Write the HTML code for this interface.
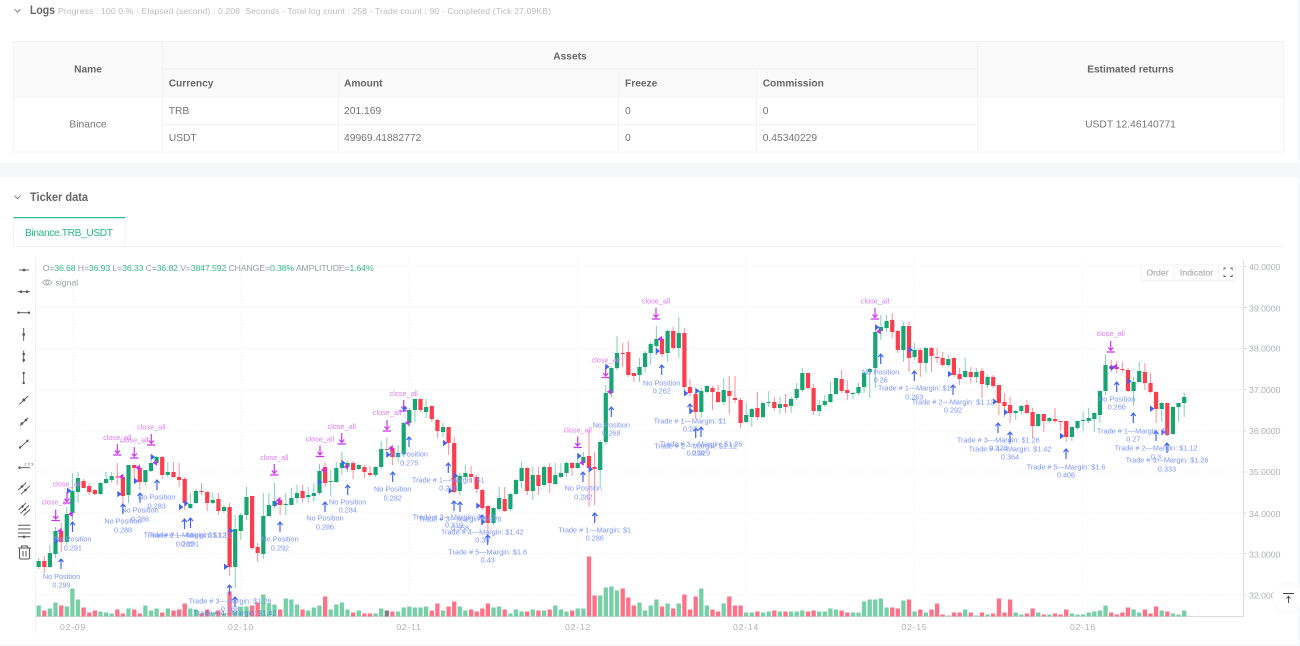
<!DOCTYPE html>
<html>
<head>
<meta charset="utf-8">
<style>
html,body{margin:0;padding:0;width:1300px;height:646px;overflow:hidden;background:#fff}
svg{display:block;filter:blur(.35px);font-family:"Liberation Sans",Arial,sans-serif}
.h{font-size:10.2px;font-weight:bold;fill:#666}
.c{font-size:10.3px;fill:#757575}
.m{text-anchor:middle}
.b{font-size:7.3px;fill:#7f95ff;text-anchor:middle}
.p{font-size:7.3px;fill:#dc7cf6;text-anchor:middle}
.a{font-size:8.7px;fill:#aeb1b6}
.d{font-size:8.7px;fill:#aeb1b6;text-anchor:middle;letter-spacing:.75px}
.ic{stroke:#555;stroke-width:.9;fill:none}
.dk{fill:#555}
.vol{stroke-width:4.3;fill:none}
.wk{stroke-width:1;fill:none}
.bd{stroke-width:4.2;fill:none}
</style>
</head>
<body>
<svg width="1300" height="646" viewBox="0 0 1300 646" xmlns="http://www.w3.org/2000/svg">
<rect width="1300" height="646" fill="#fff"/>
<rect y="163" width="1300" height="14" fill="#f5f6f7"/>
<rect y="644.5" width="1300" height="1.5" fill="#f5f6f7"/>
<rect x="1298" width="2" height="646" fill="#f6f7f8"/>

<!-- Logs header -->
<path d="M14.5 9l3 3.2 3-3.2" stroke="#777" stroke-width=".9" fill="none"/>
<text x="30" y="14" font-size="12" font-weight="bold" fill="#666" textLength="25" lengthAdjust="spacingAndGlyphs">Logs</text>
<text x="58" y="14" font-size="8.6" fill="#bcbcbc" textLength="493" xml:space="preserve">Progress : 100.0 % - Elapsed (second) : 0.208  Seconds - Total log count : 258 - Trade count : 90 - Completed (Tick 27.09KB)</text>

<!-- Table -->
<rect x="13.5" y="41.5" width="1270" height="55.5" fill="#fafafa"/>
<g stroke="#f3f3f3" fill="none">
<rect x="13.5" y="41.5" width="1270" height="110.5"/>
<path d="M13.5 97H1283.5M162.5 41.5V152M977.5 41.5V152M162.5 69H977.5M338.5 69V152M618.5 69V152M756.5 69V152M162.5 124.5H977.5"/>
</g>
<text x="88" y="72.5" class="h m">Name</text>
<text x="570" y="59.5" class="h m">Assets</text>
<text x="1130.5" y="72.5" class="h m">Estimated returns</text>
<text x="168.7" y="86.5" class="h">Currency</text>
<text x="344" y="86.5" class="h">Amount</text>
<text x="625" y="86.5" class="h">Freeze</text>
<text x="762.7" y="86.5" class="h">Commission</text>
<text x="88" y="127.5" class="c m">Binance</text>
<text x="168.7" y="114" class="c">TRB</text>
<text x="344" y="114" class="c">201.169</text>
<text x="625" y="114" class="c">0</text>
<text x="762.7" y="114" class="c">0</text>
<text x="168.7" y="141" class="c">USDT</text>
<text x="344" y="141" class="c">49969.41882772</text>
<text x="625" y="141" class="c">0</text>
<text x="762.7" y="141" class="c">0.45340229</text>
<text x="1130.5" y="127.5" class="c m">USDT 12.46140771</text>

<!-- Ticker header -->
<path d="M14.5 195.5l3 3.2 3-3.2" stroke="#777" stroke-width=".9" fill="none"/>
<text x="30" y="201" font-size="11.6" font-weight="bold" fill="#666" textLength="58" lengthAdjust="spacingAndGlyphs">Ticker data</text>

<!-- Tab -->
<path d="M13.5 246.5H1283.5" stroke="#f2f2f2"/>
<path d="M13.5 218V246M125 218V246" stroke="#f2f2f2"/>
<rect x="13.5" y="217" width="111.5" height="1.2" fill="#26bd8c"/>
<text x="25" y="236" font-size="10.2" fill="#24b988" textLength="88">Binance.TRB_USDT</text>

<!-- Chart frame and grid -->
<path d="M35.5 257V633" stroke="#f2f2f2"/>
<path d="M1243.5 260V616.5H36" stroke="#dcdcdc" fill="none"/>
<g stroke="#f3f3f3" stroke-dasharray="1.5 2" fill="none">
<path d="M36 266.5H1243M36 307.5H1243M36 348.5H1243M36 389.5H1243M36 431H1243M36 472H1243M36 513H1243M36 553.5H1243M36 595H1243"/>
<path d="M73 257V616M241 257V616M409 257V616M578 257V616M746 257V616M914.5 257V616M1083 257V616"/>
</g>
<g stroke="#dcdcdc"><path d="M1244 266.5h3M1244 307.5h3M1244 348.5h3M1244 389.5h3M1244 431h3M1244 472h3M1244 513h3M1244 553.5h3M1244 595h3"/></g>

<!-- Volume bars -->
<path class="vol" stroke="#76cfa7" d="M38.7 616.5v-11M49.9 616.5v-8M55.5 616.5v-14M66.8 616.5v-10M72.4 616.5v-28M78 616.5v-17M100.5 616.5v-5M106.1 616.5v-4M111.7 616.5v-3M128.5 616.5v-8M145.4 616.5v-11M151 616.5v-6M156.6 616.5v-8M167.8 616.5v-8M190.3 616.5v-8M195.9 616.5v-7M212.8 616.5v-4M224 616.5v-3M235.2 616.5v-5M240.8 616.5v-10M246.5 616.5v-10M263.3 616.5v-22M268.9 616.5v-13M274.5 616.5v-12M285.8 616.5v-18M291.4 616.5v-17M297 616.5v-12M308.2 616.5v-6M313.8 616.5v-9M319.5 616.5v-11M330.7 616.5v-7M336.3 616.5v-12M341.9 616.5v-14M347.5 616.5v-7M358.8 616.5v-6M375.6 616.5v-3M381.2 616.5v-8M398.1 616.5v-5M403.7 616.5v-9M409.3 616.5v-10M414.9 616.5v-9M420.5 616.5v-9M426.1 616.5v-10M443 616.5v-6M459.8 616.5v-10M465.4 616.5v-6M493.5 616.5v-9M499.1 616.5v-10M510.4 616.5v-3M516 616.5v-7M521.6 616.5v-5M532.8 616.5v-7M544.1 616.5v-6M555.3 616.5v-11M560.9 616.5v-7M566.5 616.5v-5M577.7 616.5v-8M583.4 616.5v-8M600.2 616.5v-21M605.8 616.5v-29M611.4 616.5v-30M617 616.5v-26M639.5 616.5v-14M645.1 616.5v-6M650.7 616.5v-11M656.4 616.5v-17M667.6 616.5v-13M678.8 616.5v-13M701.3 616.5v-28M706.9 616.5v-11M723.7 616.5v-13M746.2 616.5v-4M751.8 616.5v-4M763 616.5v-4M768.7 616.5v-5M779.9 616.5v-5M791.1 616.5v-5M796.7 616.5v-5M802.3 616.5v-6M819.2 616.5v-5M824.8 616.5v-5M830.4 616.5v-8M836 616.5v-7M852.9 616.5v-4M858.5 616.5v-4M864.1 616.5v-15M869.7 616.5v-17M875.3 616.5v-17M880.9 616.5v-18M886.6 616.5v-9M903.4 616.5v-16M914.6 616.5v-5M925.9 616.5v-4M948.3 616.5v-1M965.2 616.5v-7M976.4 616.5v-1M987.6 616.5v-2M1015.7 616.5v-4M1021.3 616.5v-2M1038.2 616.5v-4M1049.4 616.5v-2M1071.9 616.5v-3M1077.5 616.5v-2M1083.1 616.5v-2M1088.7 616.5v-4M1094.3 616.5v-5M1099.9 616.5v-6M1105.5 616.5v-11M1133.6 616.5v-7M1139.2 616.5v-4M1161.7 616.5v-6M1172.9 616.5v-3M1178.5 616.5v-2M1184.2 616.5v-6"/>
<path class="vol" stroke="#fd7189" d="M44.3 616.5v-6M61.2 616.5v-11M83.6 616.5v-9M89.2 616.5v-4M94.9 616.5v-6M117.3 616.5v-7M122.9 616.5v-3M134.2 616.5v-7M139.8 616.5v-3M162.2 616.5v-4M173.5 616.5v-6M179.1 616.5v-7M184.7 616.5v-13M201.5 616.5v-3M207.2 616.5v-7M218.4 616.5v-6M229.6 616.5v-25M252.1 616.5v-11M257.7 616.5v-14M280.1 616.5v-7M302.6 616.5v-7M325.1 616.5v-20M353.1 616.5v-4M364.4 616.5v-3M370 616.5v-3M392.4 616.5v-5M431.8 616.5v-6M437.4 616.5v-13M448.6 616.5v-10M454.2 616.5v-15M471.1 616.5v-7M476.7 616.5v-5M482.3 616.5v-8M487.9 616.5v-13M504.7 616.5v-7M527.2 616.5v-5M538.4 616.5v-6M549.7 616.5v-7M572.1 616.5v-6M589 616.5v-60M594.6 616.5v-21M622.7 616.5v-28M628.3 616.5v-19M633.9 616.5v-11M662 616.5v-10M673.2 616.5v-8M684.4 616.5v-22M690 616.5v-7M695.7 616.5v-20M712.5 616.5v-7M718.1 616.5v-5M729.3 616.5v-20M735 616.5v-11M740.6 616.5v-11M757.4 616.5v-5M774.3 616.5v-6M785.5 616.5v-5M808 616.5v-5M813.6 616.5v-6M841.6 616.5v-6M847.3 616.5v-4M892.2 616.5v-9M897.8 616.5v-8M909 616.5v-17M920.3 616.5v-7M931.5 616.5v-7M937.1 616.5v-13M942.7 616.5v-2M953.9 616.5v-4M959.6 616.5v-4M970.8 616.5v-4M982 616.5v-4M993.2 616.5v-3M998.9 616.5v-18M1004.5 616.5v-4M1010.1 616.5v-17M1026.9 616.5v-3M1032.6 616.5v-8M1043.8 616.5v-2M1055 616.5v-3M1060.6 616.5v-2M1066.2 616.5v-7M1111.2 616.5v-4M1116.8 616.5v-2M1122.4 616.5v-4M1128 616.5v-9M1144.9 616.5v-7M1150.5 616.5v-3M1156.1 616.5v-10M1167.3 616.5v-5"/>
<path class="vol" stroke="#7d7d7d" d="M386.8 616.5v-6"/>

<!-- Wicks -->
<path class="wk" stroke="#80d2b3" d="M38.7 558V569M49.9 545V568M55.5 527V558M66.8 507V545M72.4 473V520M78 472V503M100.5 482V495M106.1 472V484M111.7 472V483M128.5 465V503M145.4 470V485M151 460V472M156.6 456V465M167.8 462V477M190.3 493V509M195.9 489V504M212.8 493V504M224 505V513M235.2 515V588M240.8 513V540M246.5 487V520M263.3 493V559M268.9 493V517M274.5 483V508M285.8 493V515M291.4 488V505M297 485V503M308.2 487V503M313.8 483V502M319.5 464V495M330.7 470V496M336.3 462V483M341.9 452V475M347.5 461V472M358.8 464V470M375.6 466V477M381.2 441V469M398.1 445V462M403.7 422V457M409.3 408V427M414.9 399V422M426.1 399V418M443 423V437M459.8 473V495M465.4 465V480M493.5 507V525M499.1 487V511M510.4 493V511M516 479V495M521.6 462V488M532.8 467V500M544.1 465V487M555.3 463V485M560.9 463V478M566.5 461V477M577.7 453V469M583.4 452V465M600.2 440V487M605.8 385V445M611.4 367V397M617 336V370M639.5 358V382M645.1 351V372M650.7 342V364M656.4 326V355M667.6 329V362M678.8 317V358M701.3 388V418M706.9 385V393M723.7 378V405M746.2 403V423M751.8 408V427M763 402V418M768.7 391V407M779.9 397V414M791.1 397V413M796.7 383V400M802.3 368V392M819.2 400V416M824.8 395V407M830.4 382V403M836 378V395M852.9 392V399M858.5 383V395M864.1 372V393M869.7 368V398M875.3 330V388M880.9 315V340M886.6 315V332M903.4 322V362M914.6 343V360M925.9 347V373M948.3 355V367M965.2 358V378M976.4 368V383M987.6 375V388M1015.7 410V420M1021.3 405V414M1038.2 414V427M1049.4 417V423M1071.9 427V441M1077.5 421V430M1083.1 412V431M1088.7 408V423M1094.3 412V432M1099.9 391V423M1105.5 354V395M1133.6 377V406M1139.2 362V383M1161.7 402V422M1172.9 406V435M1178.5 403V422M1184.2 393V417"/>
<path class="wk" stroke="#fd8e9a" d="M44.3 556V573M61.2 523V552M83.6 479V488M89.2 483V495M94.9 489V495M117.3 463V485M122.9 474V507M134.2 465V483M139.8 468V490M162.2 456V479M173.5 462V478M179.1 463V487M184.7 477V510M201.5 483V495M207.2 491V511M218.4 493V515M229.6 503V576M252.1 496V550M257.7 543V562M280.1 497V515M302.6 485V502M325.1 463V487M353.1 461V479M364.4 465V478M370 466V477M392.4 445V465M420.5 399V412M431.8 405V422M437.4 419V438M448.6 427V455M454.2 437V493M471.1 466V483M476.7 475V493M482.3 489V510M487.9 505V533M504.7 487V512M527.2 467V495M538.4 467V495M549.7 463V493M572.1 462V476M589 430V507M594.6 452V505M622.7 343V367M628.3 341V377M633.9 373V382M662 338V357M673.2 327V350M684.4 328V392M690 379V396M695.7 392V419M712.5 386V410M718.1 385V403M729.3 376V414M735 376V403M740.6 398V428M757.4 392V420M774.3 397V411M785.5 394V413M808 373V390M813.6 384V415M841.6 370V393M847.3 380V400M892.2 313V338M897.8 330V353M909 322V372M920.3 348V377M931.5 347V372M937.1 348V363M942.7 352V367M953.9 357V377M959.6 368V385M970.8 367V383M982 368V398M993.2 375V388M998.9 385V415M1004.5 393V417M1010.1 397V423M1026.9 400V414M1032.6 408V438M1043.8 414V432M1055 408V423M1060.6 421V431M1066.2 421V442M1111.2 360V372M1116.8 361V373M1122.4 362V372M1128 368V392M1144.9 363V390M1150.5 373V393M1156.1 391V423M1167.3 403V436"/>
<path class="wk" stroke="#bbbbbb" d="M386.8 438V453"/>

<!-- Candle bodies -->
<path class="bd" stroke="#17a673" d="M38.7 561V567M49.9 553V567M55.5 531V554M66.8 514V542M72.4 491V513M78 478V492M100.5 483V494M106.1 479V483M111.7 476V480M128.5 465V495M145.4 470V482M151 463V471M156.6 457V463M167.8 472V475M190.3 504V508M195.9 491V503M212.8 500V503M224 507V511M235.2 529V567M240.8 515V531M246.5 497V515M263.3 516V554M268.9 505V516M274.5 501V506M285.8 504V505M291.4 498V505M297 493V498M308.2 495V497M313.8 493V496M319.5 471V493M330.7 481V482M336.3 468V482M341.9 463V468M347.5 463V467M358.8 465V469M375.6 467V475M381.2 449V467M398.1 453V457M403.7 423V454M409.3 410V423M414.9 399V410M426.1 407V412M443 427V432M459.8 476V491M465.4 473V477M493.5 508V523M499.1 498V509M510.4 494V509M516 480V494M521.6 468V481M532.8 475V491M544.1 467V485M555.3 475V484M560.9 473V477M566.5 463V473M577.7 463V468M583.4 457V463M600.2 442V470M605.8 393V442M611.4 368V393M617 353V368M639.5 367V375M645.1 353V367M650.7 344V353M656.4 339V346M667.6 331V353M678.8 333V348M701.3 391V412M706.9 386V392M723.7 390V402M746.2 415V422M751.8 409V417M763 403V417M768.7 402V403M779.9 404V408M791.1 399V406M796.7 389V398M802.3 373V390M819.2 405V411M824.8 401V405M830.4 394V402M836 378V394M852.9 393V394M858.5 387V393M864.1 373V387M869.7 369V372M875.3 332V368M880.9 327V331M886.6 321V328M903.4 326V350M914.6 350V357M925.9 348V363M948.3 359V365M965.2 371V377M976.4 372V377M987.6 377V385M1015.7 411V413M1021.3 406V411M1038.2 414V426M1049.4 418V421M1071.9 427V437M1077.5 421V428M1083.1 420V421M1088.7 418V421M1094.3 413V419M1099.9 391V415M1105.5 365V391M1133.6 382V391M1139.2 371V382M1161.7 403V409M1172.9 407V434M1178.5 403V407M1184.2 397V403"/>
<path class="bd" stroke="#fb3d4e" d="M44.3 561V567M61.2 531V542M83.6 481V488M89.2 486V492M94.9 490V494M117.3 476.5V477.5M122.9 477V496M134.2 465V468M139.8 468V482M162.2 457V475M173.5 472V477M179.1 477V480M184.7 479V503M201.5 491V492M207.2 492V503M218.4 499V511M229.6 507V567M252.1 496V548M257.7 547V553M280.1 500V505M302.6 491V498M325.1 467V483M353.1 463V470M364.4 467V472M370 473V475M392.4 448V457M420.5 399V410M431.8 406V419M437.4 420V431M448.6 427V443M454.2 443V492M471.1 474V477M476.7 477V489M482.3 490V508M487.9 506V523M504.7 499V511M527.2 468V491M538.4 475V486M549.7 467V483M572.1 463V468M589 456V468M594.6 467V469M622.7 353V354M628.3 352V375M633.9 373V376M662 339V354M673.2 331V348M684.4 333V387M690 387V393M695.7 394V412M712.5 388V392M718.1 392V402M729.3 391V396M735 398V400M740.6 400V423M757.4 408V417M774.3 402V408M785.5 404V407M808 373V388M813.6 388V411M841.6 379V391M847.3 390V393M892.2 320V332M897.8 331V350M909 326V358M920.3 350V363M931.5 348V356M937.1 357V358M942.7 358V365M953.9 358V375M959.6 374V379M970.8 372V377M982 371V384M993.2 377V386M998.9 385V403M1004.5 402V406M1010.1 405V413M1026.9 405V413M1032.6 412V426M1043.8 414V421M1055 419V421M1060.6 421V422M1066.2 421V437M1111.2 366V369M1116.8 367V369M1122.4 369V370M1128 370V391M1144.9 372V383M1150.5 383V392M1156.1 392V409M1167.3 403V435"/>
<path class="bd" stroke="#888888" d="M386.8 449V450"/>

<!-- Blue arrows -->
<path stroke="#3f63f6" stroke-width="1.2" fill="none" d="M61 559v10m-2.5-7l2.5-3 2.5 3M72.5 522v10m-2.5-7l2.5-3 2.5 3M123 504v10m-2.5-7l2.5-3 2.5 3M140 493v10m-2.5-7l2.5-3 2.5 3M157 480v10m-2.5-7l2.5-3 2.5 3M184.5 519v10m-2.5-7l2.5-3 2.5 3M190.5 518v10m-2.5-7l2.5-3 2.5 3M229.5 585v10m-2.5-7l2.5-3 2.5 3M235 597v10m-2.5-7l2.5-3 2.5 3M280 522v10m-2.5-7l2.5-3 2.5 3M325 502v10m-2.5-7l2.5-3 2.5 3M347.7 485v10m-2.5-7l2.5-3 2.5 3M392.7 472v10m-2.5-7l2.5-3 2.5 3M409 437v10m-2.5-7l2.5-3 2.5 3M448.3 463v10m-2.5-7l2.5-3 2.5 3M454 501v10m-2.5-7l2.5-3 2.5 3M460 502v10m-2.5-7l2.5-3 2.5 3M482 515v10m-2.5-7l2.5-3 2.5 3M487.7 535v10m-2.5-7l2.5-3 2.5 3M594.7 513v10m-2.5-7l2.5-3 2.5 3M583 472v10m-2.5-7l2.5-3 2.5 3M611.3 407v10m-2.5-7l2.5-3 2.5 3M661.7 365v10m-2.5-7l2.5-3 2.5 3M690 404v10m-2.5-7l2.5-3 2.5 3M695.7 428v10m-2.5-7l2.5-3 2.5 3M701 427v10m-2.5-7l2.5-3 2.5 3M880.7 354v10m-2.5-7l2.5-3 2.5 3M914.3 371v10m-2.5-7l2.5-3 2.5 3M953 385v10m-2.5-7l2.5-3 2.5 3M998 423v10m-2.5-7l2.5-3 2.5 3M1010 432v10m-2.5-7l2.5-3 2.5 3M1066 449v10m-2.5-7l2.5-3 2.5 3M1116.7 382v10m-2.5-7l2.5-3 2.5 3M1133.3 413v10m-2.5-7l2.5-3 2.5 3M1156 431v10m-2.5-7l2.5-3 2.5 3M1167 443v10m-2.5-7l2.5-3 2.5 3"/>

<!-- Purple close arrows -->
<path stroke="#cb35ee" stroke-width="1.2" fill="none" d="M55.7 509.5v9.5m-2.5-3l2.5 3 2.5-3m-6.7 4.5h8.4M67 492v9.5m-2.5-3l2.5 3 2.5-3m-6.7 4.5h8.4M117.3 444v9.5m-2.5-3l2.5 3 2.5-3m-6.7 4.5h8.4M134.3 447v9.5m-2.5-3l2.5 3 2.5-3m-6.7 4.5h8.4M151.3 434v9.5m-2.5-3l2.5 3 2.5-3m-6.7 4.5h8.4M274.3 464v9.5m-2.5-3l2.5 3 2.5-3m-6.7 4.5h8.4M320 445.5v9.5m-2.5-3l2.5 3 2.5-3m-6.7 4.5h8.4M341.7 433v9.5m-2.5-3l2.5 3 2.5-3m-6.7 4.5h8.4M387 420v9.5m-2.5-3l2.5 3 2.5-3m-6.7 4.5h8.4M403.7 400v9.5m-2.5-3l2.5 3 2.5-3m-6.7 4.5h8.4M577.7 436.5v9.5m-2.5-3l2.5 3 2.5-3m-6.7 4.5h8.4M605.7 366.5v9.5m-2.5-3l2.5 3 2.5-3m-6.7 4.5h8.4M656 308v9.5m-2.5-3l2.5 3 2.5-3m-6.7 4.5h8.4M875 308v9.5m-2.5-3l2.5 3 2.5-3m-6.7 4.5h8.4M1110.7 341v9.5m-2.5-3l2.5 3 2.5-3m-6.7 4.5h8.4"/>

<!-- Entry / exit triangles -->
<path fill="#3f63f6" d="M57 540.7m-2-3.2l4.4 3.2-4.4 3.2zM69 490.7m-2-3.2l4.4 3.2-4.4 3.2zM119.3 494m-2-3.2l4.4 3.2-4.4 3.2zM136 481m-2-3.2l4.4 3.2-4.4 3.2zM152.7 457m-2-3.2l4.4 3.2-4.4 3.2zM181 507m-2-3.2l4.4 3.2-4.4 3.2zM186.3 503.3m-2-3.2l4.4 3.2-4.4 3.2zM226 566.7m-2-3.2l4.4 3.2-4.4 3.2zM231.3 530.7m-2-3.2l4.4 3.2-4.4 3.2zM276 503.7m-2-3.2l4.4 3.2-4.4 3.2zM320 482m-2-3.2l4.4 3.2-4.4 3.2zM343.3 463m-2-3.2l4.4 3.2-4.4 3.2zM388.3 454.7m-2-3.2l4.4 3.2-4.4 3.2zM405 408.3m-2-3.2l4.4 3.2-4.4 3.2zM445 443m-2-3.2l4.4 3.2-4.4 3.2zM450.7 490.7m-2-3.2l4.4 3.2-4.4 3.2zM455.7 475.7m-2-3.2l4.4 3.2-4.4 3.2zM478.3 505.7m-2-3.2l4.4 3.2-4.4 3.2zM483.3 521.7m-2-3.2l4.4 3.2-4.4 3.2zM579.3 456m-2-3.2l4.4 3.2-4.4 3.2zM590.7 469.3m-2-3.2l4.4 3.2-4.4 3.2zM607.3 366.7m-2-3.2l4.4 3.2-4.4 3.2zM657.7 351m-2-3.2l4.4 3.2-4.4 3.2zM686 393.3m-2-3.2l4.4 3.2-4.4 3.2zM691.3 411m-2-3.2l4.4 3.2-4.4 3.2zM697.3 391m-2-3.2l4.4 3.2-4.4 3.2zM877 327.3m-2-3.2l4.4 3.2-4.4 3.2zM910.7 349.7m-2-3.2l4.4 3.2-4.4 3.2zM950 374m-2-3.2l4.4 3.2-4.4 3.2zM995 401.7m-2-3.2l4.4 3.2-4.4 3.2zM1006 412.3m-2-3.2l4.4 3.2-4.4 3.2zM1062 436m-2-3.2l4.4 3.2-4.4 3.2zM1112.7 367.7m-2-3.2l4.4 3.2-4.4 3.2zM1129.3 381.3m-2-3.2l4.4 3.2-4.4 3.2zM1152 408.7m-2-3.2l4.4 3.2-4.4 3.2zM1163.3 432.3m-2-3.2l4.4 3.2-4.4 3.2z"/>
<path fill="#c832ee" d="M59.7 531m2-3.2l-4.4 3.2 4.4 3.2zM70.7 514m2-3.2l-4.4 3.2 4.4 3.2zM121.3 476.7m2-3.2l-4.4 3.2 4.4 3.2zM138 467.7m2-3.2l-4.4 3.2 4.4 3.2zM155 462.7m2-3.2l-4.4 3.2 4.4 3.2zM278.3 500.3m2-3.2l-4.4 3.2 4.4 3.2zM323.3 470m2-3.2l-4.4 3.2 4.4 3.2zM346 466.7m2-3.2l-4.4 3.2 4.4 3.2zM390.7 448.3m2-3.2l-4.4 3.2 4.4 3.2zM407.3 422.7m2-3.2l-4.4 3.2 4.4 3.2zM581.7 462.7m2-3.2l-4.4 3.2 4.4 3.2zM609.3 391.7m2-3.2l-4.4 3.2 4.4 3.2zM660 339m2-3.2l-4.4 3.2 4.4 3.2zM878.7 331.3m2-3.2l-4.4 3.2 4.4 3.2zM1115 366.7m2-3.2l-4.4 3.2 4.4 3.2z"/>

<!-- Annotation labels -->
<g>
<text class="b" x="61.5" y="579">No Position</text><text class="b" x="61.5" y="587.7">0.299</text>
<text class="b" x="72.8" y="541.7">No Position</text><text class="b" x="72.8" y="550.4">0.291</text>
<text class="b" x="123" y="523.7">No Position</text><text class="b" x="123" y="532.6">0.288</text>
<text class="b" x="140" y="512.7">No Position</text><text class="b" x="140" y="521.6">0.286</text>
<text class="b" x="156.7" y="499.7">No Position</text><text class="b" x="156.7" y="508.6">0.283</text>
<text class="b" x="185" y="537.7">Trade # 2---Margin: $1.12</text><text class="b" x="185" y="546.6">0.282</text>
<text class="b" x="190" y="537.7">Trade # 1---Margin: $1.12</text><text class="b" x="190" y="546.6">0.291</text>
<text class="b" x="230" y="603.3">Trade # 3---Margin: $1.26</text><text class="b" x="230" y="611.6">0.268</text>
<text class="b" x="235" y="615.6" style="fill:#4f86c8">Trade # 4---Margin: $1.42</text>
<text class="b" x="280" y="541.7">No Position</text><text class="b" x="280" y="550.6">0.292</text>
<text class="b" x="325" y="520.6">No Position</text><text class="b" x="325" y="529.3">0.286</text>
<text class="b" x="347.7" y="504.3">No Position</text><text class="b" x="347.7" y="512.6">0.284</text>
<text class="b" x="392.7" y="491.6">No Position</text><text class="b" x="392.7" y="500.3">0.282</text>
<text class="b" x="409.3" y="456.6">No Position</text><text class="b" x="409.3" y="465.3">0.275</text>
<text class="b" x="448.3" y="482.6">Trade # 1---Margin: $1</text><text class="b" x="448.3" y="490.6">0.238</text>
<text class="b" x="454" y="519.3">Trade # 2---Margin: $1.12</text><text class="b" x="454" y="527.6">0.319</text>
<text class="b" x="460" y="521.6">Trade # 3---Margin: $1.26</text><text class="b" x="460" y="530.6">0.358</text>
<text class="b" x="482.3" y="534.6">Trade # 4---Margin: $1.42</text><text class="b" x="482.3" y="542.6">0.38</text>
<text class="b" x="487.7" y="554.3">Trade # 5---Margin: $1.6</text><text class="b" x="487.7" y="562.6">0.43</text>
<text class="b" x="594.7" y="532.3">Trade # 1---Margin: $1</text><text class="b" x="594.7" y="540.6">0.286</text>
<text class="b" x="583.3" y="490.6">No Position</text><text class="b" x="583.3" y="499.6">0.282</text>
<text class="b" x="611.3" y="427.3">No Position</text><text class="b" x="611.3" y="435.3">0.268</text>
<text class="b" x="661.7" y="385.3">No Position</text><text class="b" x="661.7" y="393.3">0.262</text>
<text class="b" x="690" y="423.3">Trade # 1---Margin: $1</text><text class="b" x="690" y="431.6">0.27</text>
<text class="b" x="695.7" y="448.3">Trade # 2---Margin: $1.12</text><text class="b" x="695.7" y="455.6">0.299</text>
<text class="b" x="701" y="446.6">Trade # 3---Margin: $1.26</text><text class="b" x="701" y="455.6">0.329</text>
<text class="b" x="880.7" y="374.3">No Position</text><text class="b" x="880.7" y="382.6">0.26</text>
<text class="b" x="914.3" y="390.6">Trade # 1---Margin: $1</text><text class="b" x="914.3" y="399.3">0.263</text>
<text class="b" x="953" y="404.6">Trade # 2---Margin: $1.12</text><text class="b" x="953" y="412.6">0.292</text>
<text class="b" x="998.3" y="442.3">Trade # 3---Margin: $1.26</text><text class="b" x="998.3" y="450.6">0.328</text>
<text class="b" x="1010" y="451.3">Trade # 4---Margin: $1.42</text><text class="b" x="1010" y="459.6">0.364</text>
<text class="b" x="1066" y="469.3">Trade # 5---Margin: $1.6</text><text class="b" x="1066" y="477.3">0.406</text>
<text class="b" x="1116.7" y="401.6">No Position</text><text class="b" x="1116.7" y="409.6">0.266</text>
<text class="b" x="1133.3" y="433.3">Trade # 1---Margin: $1</text><text class="b" x="1133.3" y="441.3">0.27</text>
<text class="b" x="1156" y="450.6">Trade # 2---Margin: $1.12</text><text class="b" x="1156" y="459.3">0.3</text>
<text class="b" x="1167" y="462.6">Trade # 3---Margin: $1.26</text><text class="b" x="1167" y="471.6">0.333</text>

<text class="p" x="55.7" y="504.3">close_all</text>
<text class="p" x="66.7" y="486.6">close_all</text>
<text class="p" x="117.3" y="440">close_all</text>
<text class="p" x="134.3" y="442.3">close_all</text>
<text class="p" x="151.3" y="429.6">close_all</text>
<text class="p" x="274.3" y="460">close_all</text>
<text class="p" x="320" y="441.3">close_all</text>
<text class="p" x="341.7" y="429">close_all</text>
<text class="p" x="387" y="415">close_all</text>
<text class="p" x="403.7" y="396">close_all</text>
<text class="p" x="577.7" y="432.3">close_all</text>
<text class="p" x="605.7" y="362.6">close_all</text>
<text class="p" x="656" y="303.3">close_all</text>
<text class="p" x="875" y="303.3">close_all</text>
<text class="p" x="1110.7" y="336">close_all</text>
</g>

<!-- OHLC legend -->
<text x="42.7" y="271" font-size="8.7" fill="#9aa0a8" textLength="331">O=<tspan fill="#35b98c">36.68</tspan> H=<tspan fill="#35b98c">36.93</tspan> L=<tspan fill="#35b98c">36.33</tspan> C=<tspan fill="#35b98c">36.82</tspan> V=<tspan fill="#35b98c">3847.592</tspan> CHANGE=<tspan fill="#35b98c">0.38%</tspan> AMPLITUDE=<tspan fill="#35b98c">1.64%</tspan></text>
<g stroke="#a8adb3" stroke-width=".8" fill="none"><path d="M42.5 282.5c2.5-3.4 7-3.4 9.5 0c-2.5 3.4-7 3.4-9.5 0z"/><circle cx="47.2" cy="282.5" r="1.6"/></g>
<text x="55.5" y="285.3" font-size="8.7" fill="#9aa0a8">signal</text>

<!-- Order box -->
<rect x="1141" y="265" width="94" height="15.5" rx="1.5" fill="#fff" stroke="#f2f2f2"/>
<path d="M1174 265V280.5M1219 265V280.5" stroke="#f2f2f2"/>
<text x="1157.5" y="275.5" font-size="8.7" fill="#999" text-anchor="middle">Order</text>
<text x="1196.5" y="275.5" font-size="8.7" fill="#999" text-anchor="middle">Indicator</text>
<path d="M1224 270v-2h2.2M1230 268h2.2v2M1224 274.5v2h2.2M1232.2 274.5v2H1230" stroke="#666" stroke-width=".9" fill="none"/>

<!-- Axis labels -->
<text class="a" x="1249" y="270">40.0000</text>
<text class="a" x="1249" y="311.5">39.0000</text>
<text class="a" x="1249" y="351.5">38.0000</text>
<text class="a" x="1249" y="393">37.0000</text>
<text class="a" x="1249" y="434">36.0000</text>
<text class="a" x="1249" y="475">35.0000</text>
<text class="a" x="1249" y="517">34.0000</text>
<text class="a" x="1249" y="557.5">33.0000</text>
<text class="a" x="1249" y="598.5">32.0000</text>
<text class="d" x="73" y="630">02-09</text>
<text class="d" x="241" y="630">02-10</text>
<text class="d" x="409" y="630">02-11</text>
<text class="d" x="578" y="630">02-12</text>
<text class="d" x="746" y="630">02-14</text>
<text class="d" x="914.5" y="630">02-15</text>
<text class="d" x="1083" y="630">02-16</text>

<!-- Scroll-to-top button -->
<circle cx="1288" cy="598" r="15" fill="#fff" stroke="#f6f6f6"/>
<path d="M1283 593.5H1294M1288.5 603V596.5M1286.5 598.5l2-2.2 2 2.2" stroke="#444" stroke-width=".9" fill="none"/>

<!-- Toolbar icons -->
<g class="ic">
<path d="M19 270H29"/>
<path d="M17.5 291.7H30"/>
<path d="M18 312.7H30"/>
<path d="M23.7 328V341"/>
<path d="M23.7 350.5V362.5"/>
<path d="M23.7 372V384"/>
<path d="M19.3 404.3L28.3 396"/>
<path d="M20 425.7L28.3 417.7"/>
<path d="M19.3 448.3L28.3 440"/>
<path d="M18.3 467.7H30M18.3 467.7l2-1.3M18.3 467.7l2 1.3"/>
<path d="M18.3 490L26 482.7M21 494.3L30 485.7"/>
<path d="M18.5 510L26 503M20.5 513.5L29 505.5M23.5 515.5L30 509.5"/>
<path d="M18 525.3H30.5M18 529H30.5M18 533H30.5M18 536.8H30.5" stroke-width="1"/>
<path d="M18.3 548H31M21.5 548V546H27.5V548M19.5 548.5V557.5Q19.5 559 21 559H28Q29.6 559 29.6 557.5V548.5M23 551V556.5M26 551V556.5" stroke-width="1"/>
</g>
<g class="dk">
<circle cx="24" cy="270" r="1.4"/>
<circle cx="21" cy="291.7" r="1.3"/><circle cx="27" cy="291.7" r="1.3"/>
<circle cx="18.5" cy="312.7" r="1.2"/><circle cx="29" cy="312.7" r="1.2"/>
<circle cx="23.7" cy="334.5" r="1.4"/>
<circle cx="23.7" cy="354" r="1.3"/><circle cx="23.7" cy="360" r="1.3"/>
<circle cx="23.7" cy="373" r="1.2"/><circle cx="23.7" cy="383" r="1.2"/>
<circle cx="23.8" cy="400" r="1.5"/>
<circle cx="22" cy="423.5" r="1.3"/><circle cx="26" cy="420" r="1.3"/>
<circle cx="20" cy="447.5" r="1.2"/><circle cx="27.5" cy="440.8" r="1.2"/>
<circle cx="22" cy="486.5" r="1.3"/><circle cx="25.5" cy="490" r="1.3"/>
<circle cx="22.5" cy="506.5" r="1.2"/><circle cx="25" cy="509.5" r="1.2"/>
<circle cx="24" cy="536.8" r="1.3"/>
</g>
<text x="24.5" y="465.5" font-size="4" fill="#555">1 2 3</text>
</svg>
</body>
</html>
